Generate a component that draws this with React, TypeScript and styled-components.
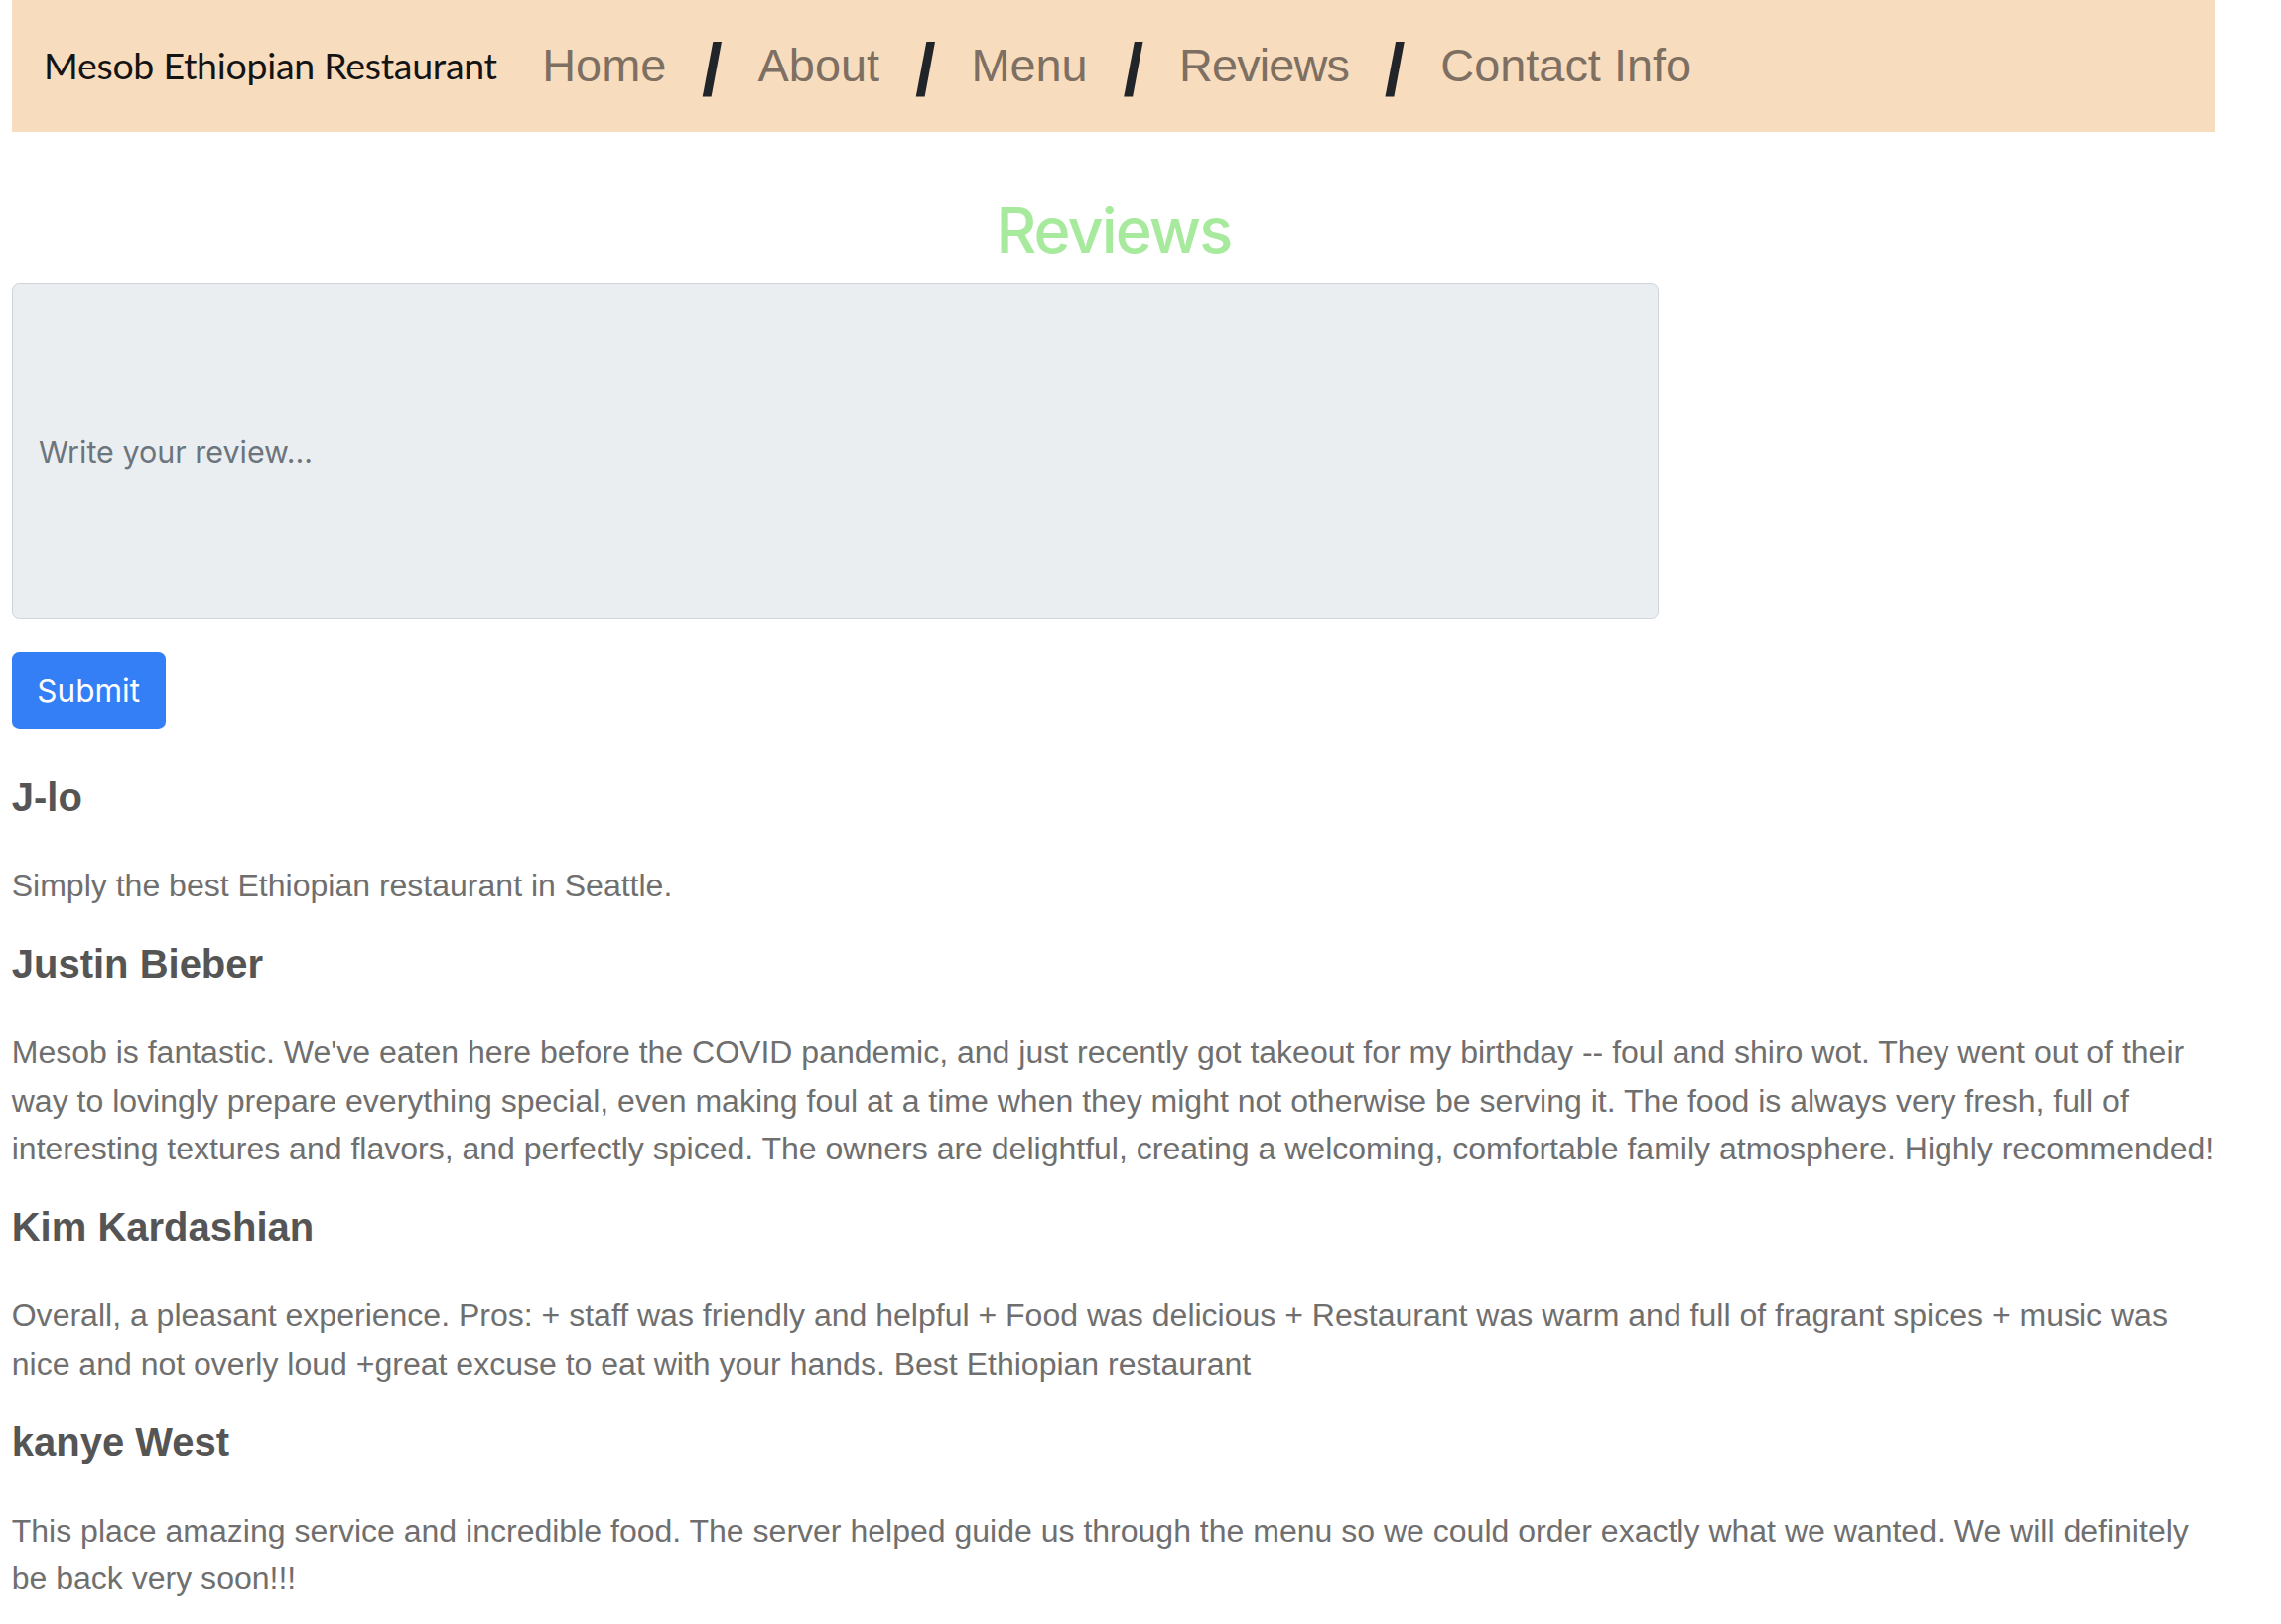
import React from "react";
import styled, { createGlobalStyle } from "styled-components";

const SCALE = 1.4656;
const u = (n: number) => `${+(n * SCALE).toFixed(2)}px`;

const GlobalStyle = createGlobalStyle`
  html, body {
    margin: 0;
    padding: 0;
    background: #ffffff;
  }
  * { box-sizing: border-box; }
`;

const Page = styled.div`
  width: ${u(1515)};
  margin-left: ${u(8)};
  font-family: "Liberation Sans", Arial, sans-serif;
  padding-bottom: ${u(20)};
`;

const NavBar = styled.nav`
  height: ${u(91)};
  background: #f8dcbe;
  display: flex;
  align-items: center;
  padding-left: ${u(22)};
  gap: ${u(24.4)};
`;

const Brand = styled.a`
  font-family: "Lato", "Open Sans", sans-serif;
  font-size: ${u(25.6)};
  color: #141414;
  text-decoration: none;
  margin-right: ${u(6.6)};
  letter-spacing: ${u(-0.2)};
  transform: translateY(${u(-1)});
`;

const NavLink = styled.a<{ $tight?: boolean }>`
  font-family: "Liberation Sans", Arial, sans-serif;
  font-size: ${u(32)};
  color: #7d6f62;
  text-decoration: none;
  line-height: 1;
  letter-spacing: ${(p) => (p.$tight ? u(-0.6) : "0")};
`;

const Separator = styled.span`
  font-family: "Liberation Sans", Arial, sans-serif;
  font-weight: 700;
  font-size: ${u(51)};
  line-height: 1;
  color: #212529;
  transform: translateY(${u(3)});
`;

const Title = styled.h1`
  margin: ${u(42)} 0 ${u(10)};
  text-align: center;
  font-family: "Inter", "Roboto", sans-serif;
  font-weight: 500;
  font-size: ${u(43)};
  letter-spacing: ${u(-1.3)};
  line-height: 1.2;
  color: #a8ea9d;
`;

const ReviewInput = styled.input`
  display: block;
  width: ${u(1132)};
  height: ${u(231)};
  margin: 0;
  padding: 0 ${u(18)};
  background: #ebeef0;
  border: ${u(1)} solid #ced4da;
  border-radius: ${u(5)};
  font-family: "Inter", "Roboto", sans-serif;
  font-size: ${u(20.8)};
  color: #495057;
  outline: none;
  &::placeholder {
    color: #6c757d;
  }
`;

const SubmitButton = styled.button`
  display: block;
  margin: ${u(23)} 0 ${u(31)};
  padding: ${u(10)} ${u(17.5)};
  height: ${u(52)};
  background: #357ff6;
  color: #ffffff;
  border: none;
  border-radius: ${u(5)};
  font-family: "Inter", "Roboto", sans-serif;
  font-size: ${u(21.5)};
  line-height: 1.5;
`;

const ReviewList = styled.section`
  display: flex;
  flex-direction: column;
`;

const ReviewName = styled.h4`
  margin: 0 0 ${u(28)};
  font-family: "Liberation Sans", Arial, sans-serif;
  font-weight: 700;
  font-size: ${u(27.3)};
  line-height: 1.2;
  color: #555555;
`;

const ReviewText = styled.p`
  margin: 0 0 ${u(21)};
  font-family: "Liberation Sans", Arial, sans-serif;
  font-size: ${u(21.85)};
  line-height: ${u(33)};
  color: #6f6f6f;
`;

const links = ["Home", "About", "Menu", "Reviews", "Contact Info"];

const reviews = [
  { name: "J-lo", text: "Simply the best Ethiopian restaurant in Seattle." },
  {
    name: "Justin Bieber",
    text:
      "Mesob is fantastic. We've eaten here before the COVID pandemic, and just recently got takeout for my birthday -- foul and shiro wot. They went out of their way to lovingly prepare everything special, even making foul at a time when they might not otherwise be serving it. The food is always very fresh, full of interesting textures and flavors, and perfectly spiced. The owners are delightful, creating a welcoming, comfortable family atmosphere. Highly recommended!",
  },
  {
    name: "Kim Kardashian",
    text:
      "Overall, a pleasant experience. Pros: + staff was friendly and helpful + Food was delicious + Restaurant was warm and full of fragrant spices + music was nice and not overly loud +great excuse to eat with your hands. Best Ethiopian restaurant",
  },
  {
    name: "kanye West",
    text:
      "This place amazing service and incredible food. The server helped guide us through the menu so we could order exactly what we wanted. We will definitely be back very soon!!!",
  },
];

export default function App() {
  return (
    <>
      <GlobalStyle />
      <Page>
        <NavBar>
          <Brand href="#">Mesob Ethiopian Restaurant</Brand>
          {links.map((l, i) => (
            <React.Fragment key={l}>
              {i > 0 && <Separator>/</Separator>}
              <NavLink href="#" $tight={l === "Reviews"}>
                {l}
              </NavLink>
            </React.Fragment>
          ))}
        </NavBar>
        <Title>Reviews</Title>
        <ReviewInput placeholder="Write your review..." />
        <SubmitButton>Submit</SubmitButton>
        <ReviewList>
          {reviews.map((r) => (
            <div key={r.name}>
              <ReviewName>{r.name}</ReviewName>
              <ReviewText>{r.text}</ReviewText>
            </div>
          ))}
        </ReviewList>
      </Page>
    </>
  );
}
